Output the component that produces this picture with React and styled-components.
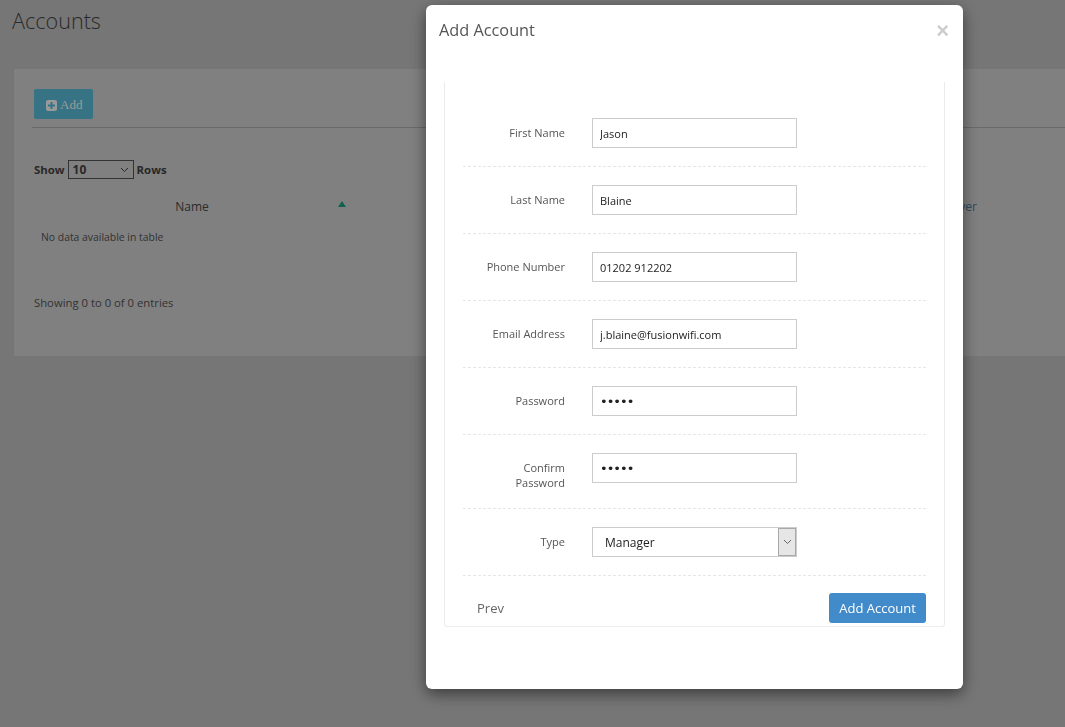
import React from 'react'
import styled, { createGlobalStyle } from 'styled-components'

const GlobalStyle = createGlobalStyle`
  html, body {
    margin: 0;
    padding: 0;
  }
  body {
    background: #c5c5c5;
    font-family: "Open Sans", "Liberation Sans", sans-serif;
    overflow: hidden;
  }
  * {
    box-sizing: border-box;
  }
`

const Page = styled.div`
  width: 1065px;
  height: 727px;
`

const PageTitle = styled.h1`
  margin: 0;
  padding: 8px 12px 0;
  font-size: 21.6px;
  line-height: 26px;
  font-weight: 300;
  color: #464646;
`

const Panel = styled.div`
  margin: 35px 0 0 14px;
  padding: 20px 0 44px 20px;
  background: #d5d5d5;
`

const Toolbar = styled.div`
  margin-left: -2px;
  padding: 0 0 8px 2px;
  border-bottom: 1px solid #b0b0b0;
`

const AddButton = styled.button`
  display: inline-flex;
  align-items: center;
  gap: 3px;
  height: 30px;
  width: 59px;
  padding: 2px 0 0 12px;
  border: none;
  border-radius: 2px;
  background: #5bc0de;
  color: #fff;
  font-family: "Liberation Serif", serif;
  font-size: 13px;
`

const LengthRow = styled.div`
  display: flex;
  align-items: center;
  gap: 3px;
  margin-top: 32px;
  height: 19px;
  font-size: 11.4px;
  font-weight: 700;
  color: #444;
`

const LengthSelect = styled.div`
  display: flex;
  align-items: center;
  justify-content: space-between;
  width: 66px;
  height: 19px;
  padding: 0 4px 0 4px;
  border: 1px solid #555;
  font-size: 12px;
  font-weight: 700;
  color: #444;
`

const Table = styled.div`
  margin-top: 16px;
`

const HeadRow = styled.div`
  display: grid;
  grid-template-columns: 316px 300px 250px 118px;
  height: 22px;
  align-items: center;
  font-size: 12px;
  color: #4a4a4a;
`

const HeadCell = styled.div`
  position: relative;
  text-align: center;
  color: ${({ $link }) => ($link ? '#4a7f9e' : '#4a4a4a')};

  ${({ $sorted }) =>
    $sorted &&
    `
    &::after {
      content: '';
      position: absolute;
      right: 4px;
      top: 3px;
      border-left: 4px solid transparent;
      border-right: 4px solid transparent;
      border-bottom: 6px solid #1aa385;
    }
  `}
`

const EmptyRow = styled.div`
  height: 40px;
  display: flex;
  align-items: center;
  padding-left: 7px;
  font-size: 10.4px;
  color: #555;
`

const Info = styled.div`
  margin-top: 37px;
  font-size: 11.3px;
  line-height: 18px;
  color: #555;
`

const Backdrop = styled.div`
  position: fixed;
  inset: 0;
  background: rgba(0, 0, 0, 0.4);
`

const Modal = styled.div`
  position: fixed;
  left: 426px;
  top: 5px;
  width: 537px;
  background: #fff;
  border-radius: 6px;
  box-shadow: 0 5px 15px rgba(0, 0, 0, 0.5);
`

const ModalHeader = styled.div`
  display: flex;
  align-items: center;
  justify-content: space-between;
  height: 50px;
  padding: 15px 15px 15px 13px;
`

const ModalTitle = styled.h4`
  margin: 0;
  font-size: 16.3px;
  line-height: 20px;
  font-weight: 400;
  color: #555;
`

const CloseButton = styled.span`
  font-family: "Liberation Sans", sans-serif;
  font-size: 22px;
  line-height: 18px;
  font-weight: 700;
  color: #000;
  opacity: 0.2;
  margin-top: 2px;
  margin-right: -1px;
`

const ModalBody = styled.div`
  padding: 27px 18px 62px;
`

const FormCard = styled.div`
  padding: 18px 18px 0;
  border: 1px solid #ececec;
  border-top: none;
  border-radius: 0 0 3px 3px;
`

const FormRow = styled.div`
  display: grid;
  grid-template-columns: 102px 205px;
  column-gap: 27px;
  align-items: start;
  padding: 18px 0;
  border-bottom: 1px dashed #e6e6e6;
`

const Label = styled.label`
  padding-top: 7px;
  font-size: 11px;
  line-height: 15px;
  color: #555;
  text-align: right;
`

const Input = styled.input`
  width: 205px;
  height: 30px;
  padding: 0 7px;
  border: 1px solid #ccc;
  border-radius: 0;
  font-family: ${({ type }) =>
    type === 'password' ? '"DejaVu Sans", sans-serif' : '"Open Sans", "Liberation Sans", sans-serif'};
  font-size: ${({ type }) => (type === 'password' ? '13px' : '11px')};
  letter-spacing: ${({ type }) => (type === 'password' ? '-1px' : '0')};
  color: #222;
  outline: none;
`

const SelectBox = styled.div`
  display: flex;
  align-items: stretch;
  width: 205px;
  height: 30px;
  border: 1px solid #ccc;
`

const SelectValue = styled.div`
  flex: 1;
  display: flex;
  align-items: center;
  padding-left: 12px;
  font-size: 12px;
  color: #222;
`

const SelectArrow = styled.div`
  width: 18px;
  display: flex;
  align-items: center;
  justify-content: center;
  background: #e6e6e6;
  border: 1px solid #a8a8a8;
`

const FormFooter = styled.div`
  display: flex;
  align-items: center;
  justify-content: space-between;
  padding: 17px 0 3px 14px;
`

const PrevLink = styled.span`
  font-size: 13px;
  color: #666;
`

const PrimaryButton = styled.button`
  width: 97px;
  height: 30px;
  border: none;
  border-radius: 3px;
  background: #428bca;
  color: #fff;
  font-family: "Open Sans", "Liberation Sans", sans-serif;
  font-size: 13px;
  padding: 0;
`

const Chevron = ({ color = '#555' }) => (
  <svg width="9" height="6" viewBox="0 0 9 6">
    <polyline points="1,1 4.5,4.5 8,1" fill="none" stroke={color} strokeWidth="1" />
  </svg>
)

const PlusSquare = () => (
  <svg width="11" height="11" viewBox="0 0 11 11">
    <rect x="0" y="0" width="11" height="11" rx="2" fill="#fff" />
    <rect x="4.5" y="2" width="2" height="7" fill="#5bc0de" />
    <rect x="2" y="4.5" width="7" height="2" fill="#5bc0de" />
  </svg>
)

const fields = [
  { label: 'First Name', value: 'Jason' },
  { label: 'Last Name', value: 'Blaine' },
  { label: 'Phone Number', value: '01202 912202' },
  { label: 'Email Address', value: 'j.blaine@fusionwifi.com' },
  { label: 'Password', value: 'aaaaa', type: 'password' },
  { label: 'Confirm Password', value: 'aaaaa', type: 'password', wrap: true },
]

const App = () => {
  return (
    <Page>
      <GlobalStyle />
      <PageTitle>Accounts</PageTitle>
      <Panel>
        <Toolbar>
          <AddButton>
            <PlusSquare />
            Add
          </AddButton>
        </Toolbar>
        <LengthRow>
          Show
          <LengthSelect>
            10
            <Chevron color="#444" />
          </LengthSelect>
          Rows
        </LengthRow>
        <Table>
          <HeadRow>
            <HeadCell $sorted>Name</HeadCell>
            <HeadCell />
            <HeadCell />
            <HeadCell $link>Server</HeadCell>
          </HeadRow>
          <EmptyRow>No data available in table</EmptyRow>
        </Table>
        <Info>Showing 0 to 0 of 0 entries</Info>
      </Panel>

      <Backdrop />
      <Modal>
        <ModalHeader>
          <ModalTitle>Add Account</ModalTitle>
          <CloseButton>×</CloseButton>
        </ModalHeader>
        <ModalBody>
          <FormCard>
            {fields.map((f) => (
              <FormRow key={f.label}>
                <Label>
                  {f.wrap ? (
                    <>
                      Confirm
                      <br />
                      Password
                    </>
                  ) : (
                    f.label
                  )}
                </Label>
                <Input type={f.type || 'text'} defaultValue={f.value} readOnly />
              </FormRow>
            ))}
            <FormRow>
              <Label>Type</Label>
              <SelectBox>
                <SelectValue>Manager</SelectValue>
                <SelectArrow>
                  <Chevron color="#666" />
                </SelectArrow>
              </SelectBox>
            </FormRow>
            <FormFooter>
              <PrevLink>Prev</PrevLink>
              <PrimaryButton>Add Account</PrimaryButton>
            </FormFooter>
          </FormCard>
        </ModalBody>
      </Modal>
    </Page>
  )
}

export default App
